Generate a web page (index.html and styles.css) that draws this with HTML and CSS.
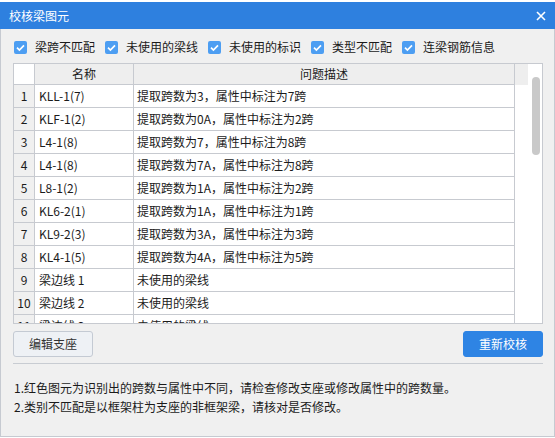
FILE: index.html
```html
<!DOCTYPE html>
<html lang="zh">
<head>
<meta charset="utf-8">
<link rel="stylesheet" href="styles.css">
</head>
<body>
<div class="window">
  <div class="titlebar">
    <span class="title">校核梁图元</span>
    <svg class="close" width="10" height="10" viewBox="0 0 10 10"><path d="M1 1L9 9M9 1L1 9" stroke="#fff" stroke-width="1.6" fill="none"/></svg>
  </div>
  <div class="body">
    <div class="checks">
      <label class="check"><svg class="cb" width="13" height="13" viewBox="0 0 13 13"><rect width="13" height="13" rx="2" fill="#4d9ef2"/><path d="M3 6.6L5.4 9L10 4.3" stroke="#fff" stroke-width="1.7" fill="none"/></svg><span>梁跨不匹配</span></label>
      <label class="check"><svg class="cb" width="13" height="13" viewBox="0 0 13 13"><rect width="13" height="13" rx="2" fill="#4d9ef2"/><path d="M3 6.6L5.4 9L10 4.3" stroke="#fff" stroke-width="1.7" fill="none"/></svg><span>未使用的梁线</span></label>
      <label class="check"><svg class="cb" width="13" height="13" viewBox="0 0 13 13"><rect width="13" height="13" rx="2" fill="#4d9ef2"/><path d="M3 6.6L5.4 9L10 4.3" stroke="#fff" stroke-width="1.7" fill="none"/></svg><span>未使用的标识</span></label>
      <label class="check"><svg class="cb" width="13" height="13" viewBox="0 0 13 13"><rect width="13" height="13" rx="2" fill="#4d9ef2"/><path d="M3 6.6L5.4 9L10 4.3" stroke="#fff" stroke-width="1.7" fill="none"/></svg><span>类型不匹配</span></label>
      <label class="check"><svg class="cb" width="13" height="13" viewBox="0 0 13 13"><rect width="13" height="13" rx="2" fill="#4d9ef2"/><path d="M3 6.6L5.4 9L10 4.3" stroke="#fff" stroke-width="1.7" fill="none"/></svg><span>连梁钢筋信息</span></label>
    </div>
    <div class="table">
      <div class="grid">
        <div class="row head">
          <div class="c num"></div>
          <div class="c name center">名称</div>
          <div class="c desc center">问题描述</div>
          <div class="c fill"></div>
        </div>
        <div class="rows">
          <div class="row"><div class="c num">1</div><div class="c name">KLL-1(7)</div><div class="c desc">提取跨数为3，属性中标注为7跨</div><div class="c fill"></div></div>
          <div class="row"><div class="c num">2</div><div class="c name">KLF-1(2)</div><div class="c desc">提取跨数为0A，属性中标注为2跨</div><div class="c fill"></div></div>
          <div class="row"><div class="c num">3</div><div class="c name">L4-1(8)</div><div class="c desc">提取跨数为7，属性中标注为8跨</div><div class="c fill"></div></div>
          <div class="row"><div class="c num">4</div><div class="c name">L4-1(8)</div><div class="c desc">提取跨数为7A，属性中标注为8跨</div><div class="c fill"></div></div>
          <div class="row"><div class="c num">5</div><div class="c name">L8-1(2)</div><div class="c desc">提取跨数为1A，属性中标注为2跨</div><div class="c fill"></div></div>
          <div class="row"><div class="c num">6</div><div class="c name">KL6-2(1)</div><div class="c desc">提取跨数为1A，属性中标注为1跨</div><div class="c fill"></div></div>
          <div class="row"><div class="c num">7</div><div class="c name">KL9-2(3)</div><div class="c desc">提取跨数为3A，属性中标注为3跨</div><div class="c fill"></div></div>
          <div class="row"><div class="c num">8</div><div class="c name">KL4-1(5)</div><div class="c desc">提取跨数为4A，属性中标注为5跨</div><div class="c fill"></div></div>
          <div class="row"><div class="c num">9</div><div class="c name">梁边线 1</div><div class="c desc">未使用的梁线</div><div class="c fill"></div></div>
          <div class="row"><div class="c num">10</div><div class="c name">梁边线 2</div><div class="c desc">未使用的梁线</div><div class="c fill"></div></div>
          <div class="row"><div class="c num">11</div><div class="c name">梁边线 3</div><div class="c desc">未使用的梁线</div><div class="c fill"></div></div>
        </div>
      </div>
      <div class="scroll"><div class="thumb"></div></div>
    </div>
    <div class="buttons">
      <button class="btn">编辑支座</button>
      <button class="btn primary">重新校核</button>
    </div>
    <div class="sep"></div>
    <div class="notes">
      <p>1.红色图元为识别出的跨数与属性中不同，请检查修改支座或修改属性中的跨数量。</p>
      <p>2.类别不匹配是以框架柱为支座的非框架梁，请核对是否修改。</p>
    </div>
  </div>
</div>
</body>
</html>
```

FILE: styles.css
```css
* { box-sizing: border-box; }
html, body {
  margin: 0;
  padding: 0;
  background: #ffffff;
}
body {
  font-family: "Noto Sans CJK SC", "Noto Sans", sans-serif;
  font-size: 12px;
  color: #1b1b1b;
}
.window {
  width: 555px;
  padding-top: 2px;
  display: flex;
  flex-direction: column;
}
.titlebar {
  height: 27px;
  background: #2e80df;
  display: flex;
  align-items: center;
  justify-content: space-between;
  padding: 0 9px 0 9px;
}
.title {
  color: #ffffff;
  font-size: 12px;
  line-height: 16px;
}
.close {
  display: block;
  margin-right: 0px;
}
.body {
  height: 408px;
  background: #f0f0f0;
  border: 1px solid #c6cad1;
  border-top: none;
  padding: 0 11px 0 12px;
  display: flex;
  flex-direction: column;
}
.checks {
  margin-top: 11px;
  height: 14px;
  display: flex;
  align-items: center;
  padding-left: 1px;
  gap: 10px;
}
.check {
  display: flex;
  align-items: center;
  gap: 8px;
  line-height: 14px;
}
.cb { display: block; }
.table {
  margin-top: 9px;
  height: 261px;
  border: 1px solid #c7cad0;
  background: #ffffff;
  display: flex;
  overflow: hidden;
}
.grid {
  width: 514px;
  display: flex;
  flex-direction: column;
}
.row {
  display: flex;
  height: 23px;
}
.row.head {
  height: 21px;
  background: #eeeeee;
}
.rows {
  flex: 1;
  overflow: hidden;
}
.c {
  border-right: 1px solid #c7cad0;
  border-bottom: 1px solid #c7cad0;
  line-height: 22px;
  white-space: nowrap;
  overflow: hidden;
}
.head .c { line-height: 20px; }
.num {
  width: 21px;
  text-align: center;
  background: #f0f0f0;
}
.head .num { background: #ffffff; }
.name {
  width: 99px;
  padding-left: 4px;
  background: #ffffff;
}
.desc {
  width: 381px;
  padding-left: 3px;
  background: #ffffff;
}
.head .name, .head .desc { background: #eeeeee; }
.center { text-align: center; padding-left: 0; }
.fill {
  width: 13px;
  border-right: none;
  border-bottom: none;
  background: #ffffff;
}
.head .fill { background: #eeeeee; }
.scroll {
  width: 14px;
  background: #ffffff;
  padding: 13px 1px 0 4px;
}
.thumb {
  width: 8px;
  height: 78px;
  border-radius: 4px;
  background: #c9c9c9;
}
.buttons {
  margin-top: 7px;
  display: flex;
  justify-content: space-between;
}
.btn {
  height: 26px;
  width: 80px;
  font-family: inherit;
  font-size: 12px;
  color: #333333;
  background: #eef1f5;
  border: 1px solid #c4cad3;
  border-radius: 3px;
  padding: 0;
  line-height: 24px;
}
.btn.primary {
  background: #2e84e4;
  border-color: #2e84e4;
  color: #ffffff;
}
.sep {
  margin-top: 6px;
  height: 1px;
  background: #c8ccd2;
  width: 530px;
}
.notes {
  margin-top: 14px;
  padding-left: 1px;
}
.notes p {
  margin: 0;
  line-height: 19px;
}
```
